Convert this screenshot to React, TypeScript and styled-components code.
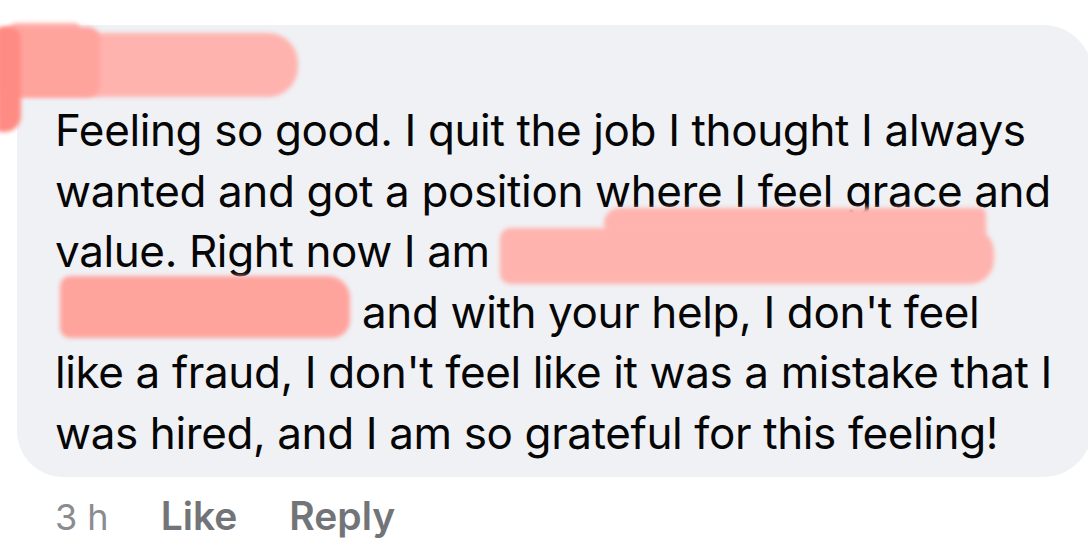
import React from "react";
import styled, { createGlobalStyle } from "styled-components";

const Global = createGlobalStyle`
  html, body { margin: 0; padding: 0; background: #ffffff; }
  body { font-family: Inter, "Helvetica Neue", Arial, sans-serif; -webkit-font-smoothing: antialiased; }
`;

const Page = styled.div`
  width: 1088px;
  height: 541px;
  overflow: hidden;
  padding: 25px 0 0 17px;
  box-sizing: border-box;
  background: #ffffff;
`;

const Bubble = styled.div`
  position: relative;
  width: 1076px;
  box-sizing: border-box;
  background: #f0f1f5;
  border-radius: 46px 50px 50px 46px;
  padding: 10px 30px 13px 38px;
`;

const NameRow = styled.div`
  position: relative;
  height: 65px;
`;

const Line = styled.div`
  font-size: 44px;
  line-height: 60.6px;
  color: #060606;
  letter-spacing: -0.38px;
  white-space: nowrap;
`;

const Redact = styled.span<{ $w: number }>`
  position: relative;
  display: inline-block;
  width: ${(p) => p.$w}px;
  height: 44px;
  vertical-align: baseline;
`;

const Stroke = styled.span<{ $tone: "light" | "mid" | "dark" }>`
  position: absolute;
  display: block;
  border-radius: 10px 24px 24px 10px;
  filter: blur(2px);
  background: ${(p) =>
    p.$tone === "light" ? "#ffb3ae" : p.$tone === "mid" ? "#ffa39d" : "#ff8b85"};
`;

const Footer = styled.div`
  display: flex;
  align-items: baseline;
  gap: 52px;
  margin: 17px 0 0 38px;
  font-size: 36px;
  line-height: 44px;
`;

const Time = styled.span`
  color: #8a8c90;
  font-weight: 400;
`;

const Action = styled.span`
  color: #727478;
  font-size: 39px;
  font-weight: 600;
`;

export default function App() {
  return (
    <>
      <Global />
      <Page>
        <Bubble>
          <NameRow>
            <Stroke $tone="light" style={{ left: -45, top: -2, width: 288, height: 64, borderRadius: "8px 30px 30px 8px" }} />
            <Stroke $tone="light" style={{ left: -45, top: -12, width: 70, height: 18, borderRadius: "6px" }} />
            <Stroke $tone="mid" style={{ left: -55, top: -8, width: 100, height: 70, borderRadius: "6px 12px 12px 6px" }} />
            <Stroke $tone="dark" style={{ left: -58, top: -8, width: 24, height: 105, borderRadius: "4px 12px 16px 4px" }} />
          </NameRow>
          <Line>Feeling so good. I quit the job I thought I always</Line>
          <Line>wanted and got a position where I feel grace and</Line>
          <Line>
            value. Right now I am{" "}
            <Redact $w={492}>
              <Stroke $tone="light" style={{ left: 102, top: -15, width: 382, height: 30, borderRadius: "20px 8px 8px 20px" }} />
              <Stroke $tone="light" style={{ left: -2, top: 5, width: 494, height: 56 }} />
            </Redact>
          </Line>
          <Line>
            <Redact $w={295}>
              <Stroke $tone="mid" style={{ left: 5, top: -8, width: 290, height: 62, borderRadius: "10px 22px 18px 10px" }} />
            </Redact>{" "}
            and with your help, I don't feel
          </Line>
          <Line>like a fraud, I don't feel like it was a mistake that I</Line>
          <Line>was hired, and I am so grateful for this feeling!</Line>
        </Bubble>
        <Footer>
          <Time>3 h</Time>
          <Action>Like</Action>
          <Action>Reply</Action>
        </Footer>
      </Page>
    </>
  );
}
